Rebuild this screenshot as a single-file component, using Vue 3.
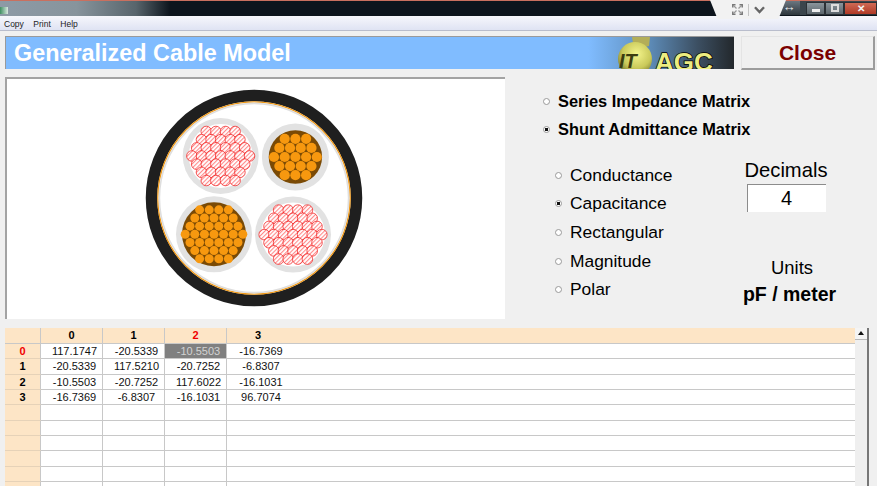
<template>
  <div class="page">
    <!-- window chrome -->
    <div class="chrome">
      <div class="chrome-glass">
        <span class="app-icon"></span>
      </div>
      <div class="notch">
        <svg width="11" height="11" viewBox="0 0 11 11">
          <path d="M0.8 3.5V0.8h2.7M7.5 0.8h2.7v2.7M10.2 7.5v2.7H7.5M3.5 10.2H0.8V7.5" fill="none" stroke="#777" stroke-width="1.5" />
          <path d="M2 2l2.5 2.5M9 2L6.5 4.5M9 9L6.5 6.5M2 9l2.5-2.5" fill="none" stroke="#999" stroke-width="1.3" />
        </svg>
        <span class="notch-sep"></span>
        <svg width="11" height="8" viewBox="0 0 11 8">
          <path d="M1 1.2l4.5 4.8L10 1.2" fill="none" stroke="#666" stroke-width="2.4" />
        </svg>
      </div>
      <div class="win-controls">
        <span class="win-resize">↔</span>
        <span class="win-btn">
          <i class="min-glyph"></i>
        </span>
        <span class="win-btn">
          <i class="max-glyph"></i>
        </span>
        <span class="win-btn win-close">✕</span>
      </div>
    </div>

    <!-- menu -->
    <div class="menu">
      <span v-for="item in menuItems" :key="item">{{ item }}</span>
    </div>

    <!-- title row -->
    <div class="head-row">
      <div class="title-band">
        <h1>Generalized Cable Model</h1>
        <svg class="logo" width="134" height="32" viewBox="0 0 134 32">
          <defs>
            <radialGradient id="helmet" cx="0.55" cy="0.35" r="0.7">
              <stop offset="0" stop-color="#f4f48c" />
              <stop offset="0.6" stop-color="#c9c95a" />
              <stop offset="1" stop-color="#6c6c28" />
            </radialGradient>
          </defs>
          <path d="M32 0h18l-1 9-15 3z" fill="#b3ae58" />
          <circle cx="35" cy="22" r="17" fill="url(#helmet)" />
          <text x="19" y="31" class="logo-it">IT</text>
          <text x="55" y="34" class="logo-agc">AGC</text>
        </svg>
      </div>
      <button class="close-btn">Close</button>
    </div>

    <!-- cable drawing and options -->
    <div class="mid-row">
      <div class="cable-panel">
        <svg width="224" height="224" viewBox="0 0 224 224">
          <defs>
            <pattern id="hatch" width="3" height="3" patternUnits="userSpaceOnUse" patternTransform="rotate(-45)">
              <rect width="3" height="3" fill="#fff" />
              <rect width="3" height="1.1" fill="#ff8a8a" />
            </pattern>
          </defs>
          <circle cx="112" cy="112" r="102.5" fill="none" stroke="#1f1f1f" stroke-width="11.5" />
          <circle cx="112" cy="112" r="96.2" fill="#fff" stroke="#f09a1a" stroke-width="1.3" />
          <circle cx="112" cy="112" r="94.6" fill="#fff" stroke="#dedede" stroke-width="1.6" />
          <g v-for="c in conductors" :key="c.id">
            <circle :cx="c.x" :cy="c.y" :r="c.outer" fill="#e2e2e2" />
            <circle :cx="c.x" :cy="c.y" :r="c.inner" :fill="c.copper ? '#7a4a05' : '#fff'" />
            <circle
              v-for="(s, i) in c.strands"
              :key="i"
              :cx="s.x"
              :cy="s.y"
              :r="c.r"
              :fill="c.copper ? '#f7980f' : 'url(#hatch)'"
              :stroke="c.copper ? 'none' : '#f01818'"
              stroke-width="0.7"
            />
          </g>
        </svg>
      </div>

      <div class="options">
        <div class="matrix-group">
          <label v-for="m in matrixTypes" :key="m.name" class="radio-row">
            <span class="radio" :class="{ on: m.on }"></span>{{ m.name }}
          </label>
        </div>
        <div class="lower">
          <div class="view-group">
            <label v-for="v in viewTypes" :key="v.name" class="radio-row">
              <span class="radio" :class="{ on: v.on }"></span>{{ v.name }}
            </label>
          </div>
          <div class="side">
            <div class="side-label">Decimals</div>
            <div class="decimals">4</div>
            <div class="side-label units">Units</div>
            <div class="units-value">pF / meter</div>
          </div>
        </div>
      </div>
    </div>

    <!-- matrix grid -->
    <div class="grid-wrap">
      <div class="grid">
        <div class="cell corner"></div>
        <div
          v-for="(h, i) in colHeads"
          :key="'h' + i"
          class="cell col-head"
          :class="{ red: h === '2' }"
        >{{ h }}</div>
        <div class="cell col-head tail"></div>
        <template v-for="(row, r) in rows" :key="r">
          <div class="cell row-head" :class="{ red: row.head === '0' }">{{ row.head }}</div>
          <div
            v-for="(v, c) in row.vals"
            :key="c"
            class="cell value"
            :class="{ selected: r === 0 && c === 2, lined: c < 3 }"
          >{{ v }}</div>
          <div class="cell tail"></div>
        </template>
      </div>
      <div class="scrollbar">
        <div class="scroll-btn"></div>
      </div>
    </div>
  </div>
</template>

<script setup>
const menuItems = ['Copy', 'Print', 'Help']

const matrixTypes = [
  { name: 'Series Impedance Matrix', on: false },
  { name: 'Shunt Admittance Matrix', on: true }
]

const viewTypes = [
  { name: 'Conductance', on: false },
  { name: 'Capacitance', on: true },
  { name: 'Rectangular', on: false },
  { name: 'Magnitude', on: false },
  { name: 'Polar', on: false }
]

// hex lattice of strands, counts is how many in each row
const lattice = (cx, cy, pitch, counts) => {
  const rowGap = pitch * 0.85
  const out = []
  counts.forEach((n, r) => {
    const y = cy + (r - (counts.length - 1) / 2) * rowGap
    for (let i = 0; i < n; i++) {
      out.push({ x: cx + (i - (n - 1) / 2) * pitch, y })
    }
  })
  return out
}

const big = [4, 5, 6, 7, 6, 5, 4]
const small = [3, 4, 5, 4, 3]

const conductors = [
  { id: 'a', x: 78.7, y: 70, outer: 38, inner: 32, r: 5.3, copper: false, strands: lattice(78.7, 70, 9.6, big) },
  { id: 'b', x: 153.4, y: 71, outer: 33.5, inner: 26.7, r: 5.1, copper: true, strands: lattice(153.4, 71, 10.7, small) },
  { id: 'c', x: 72, y: 148.3, outer: 38, inner: 32, r: 4.5, copper: true, strands: lattice(72, 148.3, 9.6, big) },
  { id: 'd', x: 151, y: 148.6, outer: 38, inner: 32, r: 5.3, copper: false, strands: lattice(151, 148.6, 9.6, big) }
]

const colHeads = ['0', '1', '2', '3']

const blank = ['', '', '', '']
const rows = [
  { head: '0', vals: ['117.1747', '-20.5339', '-10.5503', '-16.7369'] },
  { head: '1', vals: ['-20.5339', '117.5210', '-20.7252', '-6.8307'] },
  { head: '2', vals: ['-10.5503', '-20.7252', '117.6022', '-16.1031'] },
  { head: '3', vals: ['-16.7369', '-6.8307', '-16.1031', '96.7074'] },
  { head: '', vals: blank },
  { head: '', vals: blank },
  { head: '', vals: blank },
  { head: '', vals: blank },
  { head: '', vals: blank },
  { head: '', vals: blank }
]
</script>

<style>
html,
body {
  margin: 0;
  background: #f0f0f0;
  overflow: hidden;
}
</style>

<style scoped>
.page {
  width: 877px;
  height: 486px;
  overflow: hidden;
  background: #f0f0f0;
  font-family: "Liberation Sans", Arial, sans-serif;
  color: #000;
}

/* window chrome */
.chrome {
  position: relative;
  height: 16px;
  box-sizing: border-box;
  background: #0d151d;
  border-top: 1px solid #c9705f;
}

.chrome-glass {
  width: 170px;
  height: 100%;
  background: linear-gradient(90deg, #8d9aa6 0%, #87949c 45%, #58656c 80%, #0d151d 100%);
}

.app-icon {
  display: block;
  width: 8px;
  height: 7px;
  position: relative;
  top: 6px;
  background: linear-gradient(90deg, #3f8f62, #d9e8e0);
}

.notch {
  position: absolute;
  left: 710px;
  top: -1px;
  width: 76px;
  height: 19px;
  display: flex;
  align-items: center;
  justify-content: center;
  gap: 5px;
  background: #f2f2f2;
  clip-path: polygon(0 0, 100% 0, 90% 100%, 10% 100%);
  z-index: 1;
}

.notch-sep {
  width: 1px;
  height: 12px;
  background: #c4c4c4;
}

.win-controls {
  position: absolute;
  left: 778px;
  top: 0;
  right: 0;
  height: 14px;
  display: flex;
  align-items: center;
  background: #3b454c;
}

.win-resize {
  width: 22px;
  height: 14px;
  margin-right: 6px;
  line-height: 12px;
  font-size: 13px;
  text-align: center;
  color: #eee;
  background: linear-gradient(#6b7680, #2d363c);
}

.win-btn {
  width: 19px;
  height: 13px;
  display: flex;
  align-items: center;
  justify-content: center;
  box-sizing: border-box;
  border: 1px solid #2b3136;
  background: linear-gradient(#8a959c, #5c666c);
}

.win-close {
  flex: 1;
  font-size: 10px;
  font-weight: bold;
  color: #f3f3f3;
  background: linear-gradient(#cf6a55, #b03a26);
}

.min-glyph {
  width: 8px;
  height: 3px;
  margin-top: 4px;
  background: #eee;
}

.max-glyph {
  width: 8px;
  height: 8px;
  box-sizing: border-box;
  border: 2px solid #ddd;
}

/* menu */
.menu {
  height: 14px;
  padding-left: 4px;
  display: flex;
  gap: 9.5px;
  font-size: 8.5px;
  line-height: 16px;
  color: #222;
  background: linear-gradient(#f6f7fc, #dfe3f3);
  border-bottom: 1px solid #b9bdcc;
}

/* title row */
.head-row {
  display: flex;
  align-items: flex-start;
  gap: 7px;
  padding: 5px 2px 0 5px;
}

.title-band {
  position: relative;
  width: 729px;
  height: 33px;
  box-sizing: border-box;
  border-top: 1px solid #9a9a9a;
  border-left: 1px solid #9a9a9a;
  background: linear-gradient(90deg, #80bcff 0, #80bcff 80%, #5f8fbd 88%, #3c4f62 95%, #23282c 100%);
  overflow: hidden;
}

.title-band h1 {
  margin: 0;
  padding-left: 8px;
  font-size: 23.4px;
  line-height: 33px;
  font-weight: bold;
  color: #fff;
}

.logo {
  position: absolute;
  right: 0;
  top: 0;
}

.logo-it {
  font: italic bold 20px "Liberation Sans", sans-serif;
  fill: #3c3c10;
}

.logo-agc {
  font: bold 26px "Liberation Sans", sans-serif;
  fill: #ecec80;
  stroke: #000;
  stroke-width: 1.5px;
  paint-order: stroke;
}

.close-btn {
  width: 134px;
  height: 34px;
  padding: 0;
  box-sizing: border-box;
  background: #f0f0f0;
  border: 1px solid;
  border-color: #e4e4e4 #9c9c9c #9c9c9c #e4e4e4;
  border-bottom-width: 2px;
  border-right-width: 2px;
  font-family: inherit;
  font-size: 21px;
  font-weight: bold;
  color: #7b0000;
}

/* cable and options */
.mid-row {
  display: flex;
  height: 249px;
  box-sizing: border-box;
  padding: 7px 0 0 5px;
}

.cable-panel {
  width: 500px;
  height: 242px;
  box-sizing: border-box;
  display: flex;
  justify-content: center;
  align-items: center;
  background: #fff;
  border-top: 2px solid #a3a3a3;
  border-left: 2px solid #a3a3a3;
}

.cable-panel svg {
  margin-left: -4px;
  margin-top: -2px;
}

.options {
  flex: 1;
  padding: 15px 0 0 38px;
}

.matrix-group {
  display: flex;
  flex-direction: column;
  gap: 10px;
  font-size: 16.4px;
  font-weight: bold;
}

.radio-row {
  display: flex;
  align-items: center;
  height: 18px;
  white-space: nowrap;
}

.radio {
  width: 7px;
  height: 7px;
  margin-right: 8px;
  flex: none;
  box-sizing: border-box;
  border: 1px solid #9a9a9a;
  border-radius: 50%;
  background: #fff;
}

.radio.on {
  background: radial-gradient(circle, #111 0 1.6px, #fff 2px);
}

.lower {
  display: flex;
  padding: 28px 0 0 12px;
}

.view-group {
  width: 181px;
  display: flex;
  flex-direction: column;
  gap: 10.7px;
  font-size: 17.4px;
}

.side {
  width: 100px;
  display: flex;
  flex-direction: column;
  align-items: center;
  margin-top: -7px;
}

.side-label {
  font-size: 20.2px;
  line-height: 22px;
  white-space: nowrap;
}

.decimals {
  width: 79px;
  height: 28px;
  margin-top: 3px;
  box-sizing: border-box;
  background: #fff;
  border-top: 1px solid #8c8c8c;
  border-left: 1px solid #8c8c8c;
  font-size: 20px;
  line-height: 26px;
  text-align: center;
}

.units {
  margin: 45px 0 0 12px;
  font-size: 18.4px;
}

.units-value {
  margin: 4px 0 0 7px;
  font-size: 19.5px;
  line-height: 22px;
  font-weight: bold;
  white-space: nowrap;
}

/* grid */
.grid-wrap {
  display: flex;
  margin: 9px 0 0 5px;
  width: 864px;
  height: 160px;
}

.grid {
  flex: 1;
  display: grid;
  grid-template-columns: 36px 62px 62px 62px 62px 1fr;
  grid-template-rows: 16px;
  grid-auto-rows: 15.33px;
  align-content: start;
  background: #fff;
  font-size: 11px;
  overflow: hidden;
}

.cell {
  box-sizing: border-box;
  border-bottom: 1px solid #c8c8c8;
  line-height: 14px;
  text-align: center;
  white-space: nowrap;
}

.corner,
.col-head,
.row-head {
  background: #fde5c6;
  font-weight: bold;
}

.corner,
.col-head {
  line-height: 15px;
}

.corner,
.row-head {
  border-right: 1px solid #c8c8c8;
}

.col-head:not(.tail) {
  border-right: 1px solid #c8c8c8;
}

.col-head:nth-child(5) {
  border-right: 0;
}

.row-head {
  border-bottom-color: #e6d2b8;
}

.red {
  color: #f00000;
}

.value {
  padding-left: 6px;
  color: #111;
}

.value.lined {
  border-right: 1px solid #c8c8c8;
}

.selected {
  background: #808080;
  color: #d2d2d2;
}

.scrollbar {
  width: 14px;
  box-sizing: border-box;
  background: #efefef;
  border-right: 2px solid #777;
}

.scroll-btn {
  height: 11px;
  position: relative;
  background: #f4f4f4;
  border-bottom: 1px solid #b8b8b8;
}

.scroll-btn::after {
  content: "";
  position: absolute;
  left: 3px;
  top: 3px;
  border: 3px solid transparent;
  border-top: 0;
  border-bottom: 4px solid #111;
}
</style>
